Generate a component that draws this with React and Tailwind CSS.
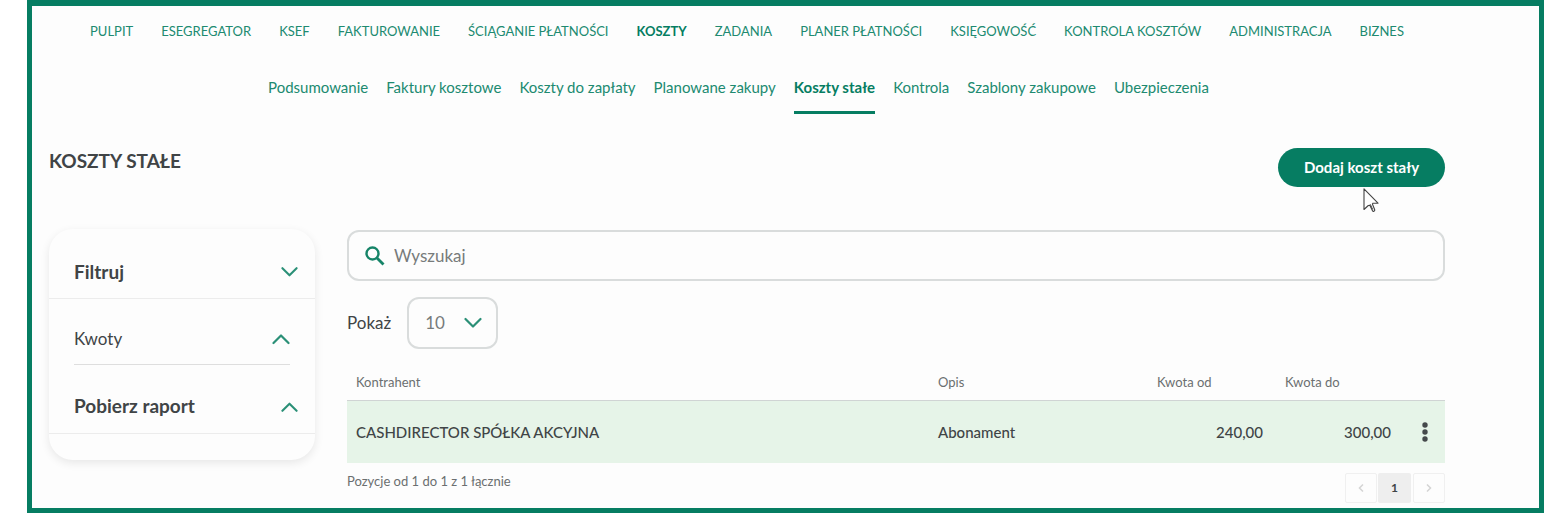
const MAIN_NAV = [
  'PULPIT',
  'ESEGREGATOR',
  'KSEF',
  'FAKTUROWANIE',
  'ŚCIĄGANIE PŁATNOŚCI',
  'KOSZTY',
  'ZADANIA',
  'PLANER PŁATNOŚCI',
  'KSIĘGOWOŚĆ',
  'KONTROLA KOSZTÓW',
  'ADMINISTRACJA',
  'BIZNES',
]

const SUB_NAV = [
  'Podsumowanie',
  'Faktury kosztowe',
  'Koszty do zapłaty',
  'Planowane zakupy',
  'Koszty stałe',
  'Kontrola',
  'Szablony zakupowe',
  'Ubezpieczenia',
]

const ROWS = [
  { name: 'CASHDIRECTOR SPÓŁKA AKCYJNA', desc: 'Abonament', from: '240,00', to: '300,00' },
]

function Chevron({ up, className }) {
  return (
    <svg viewBox="0 0 18 12" fill="none" stroke="#2b9077" strokeWidth="2.2" className={className}>
      <path d={up ? 'M1.5 10 9 2.5 16.5 10' : 'M1.5 2 9 9.5 16.5 2'} strokeLinecap="round" strokeLinejoin="round" />
    </svg>
  )
}

function Cursor() {
  return (
    <svg viewBox="0 0 16 25" className="absolute top-10 left-[85px] h-[25px] w-4">
      <path
        d="M1 .8v20.700l4.300-4 1.500-.2 2.700 5.400c.6 1.200 2.700.5 2.200-1L9.400 16l.6-.8h5Z"
        fill="#fff" stroke="#444" strokeWidth="1.1" strokeLinejoin="round"
      />
      <path d="m7.300 16.300 2.400 5.200" fill="none" stroke="#444" />
    </svg>
  )
}

function Sidebar() {
  return (
    <aside className="w-[266px] shrink-0 rounded-3xl pb-[26px] shadow-[0_3px_10px_rgba(0,0,0,0.09)]">
      <button className="flex h-[70px] w-full items-center justify-between border-b border-[#ececec] pt-[17px] pr-[17px] pl-[25px] text-[19px] font-bold">
        Filtruj
        <Chevron className="h-3 w-[17px]" />
      </button>
      <div className="px-[25px]">
        <button className="flex h-[66px] w-full items-center justify-between border-b border-[#dedede] pt-[15px] text-[17px]">
          Kwoty
          <Chevron up className="h-3 w-[18px]" />
        </button>
      </div>
      <button className="flex h-[69px] w-full items-center justify-between border-b border-[#ececec] pt-[15px] pr-[17px] pl-[25px] text-[19px] font-bold">
        Pobierz raport
        <Chevron up className="h-3 w-[17px]" />
      </button>
    </aside>
  )
}

function CostsTable() {
  return (
    <table className="mt-3 w-full table-fixed text-left">
      <thead>
        <tr className="h-[39px] border-b border-[#d0d4d4] text-[13px] text-[#6b6f70]">
          <th className="pt-1 pl-[9px] font-normal">Kontrahent</th>
          <th className="w-[219px] pt-1 pl-[9px] font-normal">Opis</th>
          <th className="w-32 pt-1 pl-[9px] font-normal">Kwota od</th>
          <th className="w-32 pt-1 pl-[9px] font-normal">Kwota do</th>
          <th className="w-[41px]" />
        </tr>
      </thead>
      <tbody>
        {ROWS.map((row) => (
          <tr key={row.name} className="h-[63px] bg-[#e6f4e8] text-[15px] font-medium">
            <td className="pl-[9px]">{row.name}</td>
            <td className="pl-[9px]">{row.desc}</td>
            <td className="pr-[13px] text-right">{row.from}</td>
            <td className="pr-[13px] text-right">{row.to}</td>
            <td>
              <button aria-label="Opcje" className="mx-auto block">
                <svg viewBox="0 0 6 20" fill="#45494b" className="h-5 w-[6px]">
                  <circle cx="3" cy="3" r="2.7" />
                  <circle cx="3" cy="10" r="2.7" />
                  <circle cx="3" cy="17" r="2.7" />
                </svg>
              </button>
            </td>
          </tr>
        ))}
      </tbody>
    </table>
  )
}

function Pagination() {
  return (
    <div className="mt-[10px] flex h-[30px] text-xs">
      <button aria-label="Poprzednia" className="flex w-8 items-center justify-center rounded-xs border border-[#f0f0f0]">
        <svg viewBox="0 0 6 8" fill="none" stroke="#d4d4d4" strokeWidth="1.5" className="h-2 w-[6px]">
          <path d="M5 .5 1.5 4 5 7.5" />
        </svg>
      </button>
      <button className="ml-px w-[33px] rounded-xs bg-[#eeeeee] font-bold">1</button>
      <button aria-label="Następna" className="ml-[2px] flex w-8 items-center justify-center rounded-xs border border-[#f0f0f0]">
        <svg viewBox="0 0 6 8" fill="none" stroke="#d4d4d4" strokeWidth="1.5" className="h-2 w-[6px]">
          <path d="M1 .5 4.5 4 1 7.5" />
        </svg>
      </button>
    </div>
  )
}

export default function App() {
  return (
    <div className="bg-white pr-1 pb-[3px] pl-[27px] font-['Lato',sans-serif] text-[#404446]">
      <div className="border-[5px] border-t-[6px] border-[#067d62] bg-[#fdfdfd] pr-[94px] pb-[5px] pl-[17px]">
        <nav className="flex justify-center gap-7 pt-[15px] text-[13px] leading-5 text-[#208a70]">
          {MAIN_NAV.map((item) => (
            <a key={item} href="#" className={item === 'KOSZTY' ? 'font-bold text-[#067d62]' : ''}>
              {item}
            </a>
          ))}
        </nav>

        <nav className="mt-9 mr-[17px] flex justify-center gap-[18px] text-[15px] leading-5 text-[#208a70]">
          {SUB_NAV.map((item) => (
            <a
              key={item}
              href="#"
              className={
                item === 'Koszty stałe'
                  ? 'border-b-[3px] border-[#067d62] pb-[14px] font-bold text-[#067d62]'
                  : 'pb-4'
              }
            >
              {item}
            </a>
          ))}
        </nav>

        <header className="mt-[34px] flex items-start justify-between">
          <h1 className="text-[19px] leading-[26px] font-bold">KOSZTY STAŁE</h1>
          <div className="relative">
            <button className="block h-[39px] w-[167px] rounded-full bg-[#067d62] text-[15px] font-bold text-white">
              Dodaj koszt stały
            </button>
            <Cursor />
          </div>
        </header>

        <div className="mt-[42px] flex items-start gap-8">
          <Sidebar />
          <main className="min-w-0 flex-1">
            <label className="mt-px flex h-[51px] items-center gap-[9px] rounded-xl border-2 border-[#d9dcdc] pl-4">
              <svg viewBox="0 0 20 20" fill="none" stroke="#168468" className="h-5 w-5">
                <circle cx="7.5" cy="7.5" r="6" strokeWidth="2.4" />
                <path d="m12 12 6.5 6.5" strokeWidth="2.8" />
              </svg>
              <input
                type="text"
                aria-label="Wyszukaj"
                placeholder="Wyszukaj"
                className="min-w-0 flex-1 text-[17px] outline-none placeholder:text-[#777b7b]"
              />
            </label>

            <div className="mt-4 flex items-center gap-4">
              <label htmlFor="page-size" className="text-[17px]">Pokaż</label>
              <div className="relative">
                <select
                  id="page-size"
                  className="block h-[52px] w-[91px] appearance-none rounded-xl border-2 border-[#d9dcdc] pl-4 text-[17px] text-[#777b7b]"
                >
                  <option>10</option>
                  <option>25</option>
                  <option>50</option>
                </select>
                <Chevron className="pointer-events-none absolute top-5 right-4 h-3 w-[18px]" />
              </div>
            </div>

            <CostsTable />

            <div className="flex items-start justify-between">
              <p className="pt-2 text-[13px] leading-5 text-[#6b6f70]">Pozycje od 1 do 1 z 1 łącznie</p>
              <Pagination />
            </div>
          </main>
        </div>
      </div>
    </div>
  )
}
